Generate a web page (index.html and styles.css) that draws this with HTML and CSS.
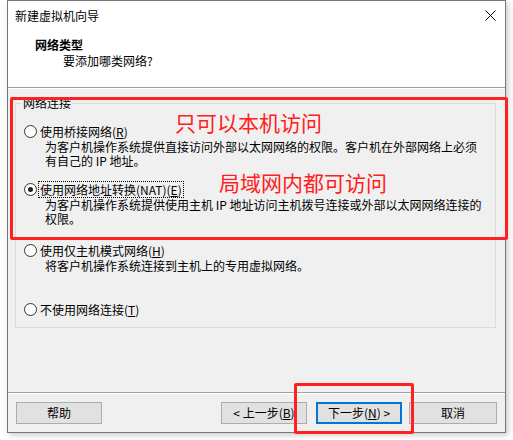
FILE: index.html
```html
<!DOCTYPE html>
<html lang="zh-CN">
<head>
<meta charset="utf-8">
<title>新建虚拟机向导</title>
<link rel="stylesheet" href="styles.css">
</head>
<body>
<div class="window">
  <div class="titlebar">
    <span class="title">新建虚拟机向导</span>
    <svg class="close" width="11" height="11" viewBox="0 0 11 11"><path d="M0.5 0.5 L10.5 10.5 M10.5 0.5 L0.5 10.5" stroke="#000" stroke-width="1" fill="none"/></svg>
  </div>
  <div class="header">
    <div class="h-title">网络类型</div>
    <div class="h-sub">要添加哪类网络?</div>
  </div>
  <div class="content">
    <fieldset class="group">
      <legend>网络连接</legend>
      <div class="row first"><span class="radio"></span><span class="label">使用桥接网络(<u>R</u>)</span></div>
      <div class="desc">
        <div class="line">为客户机操作系统提供直接访问外部以太网网络的权限。客户机在外部网络上必须</div>
        <div class="line">有自己的 IP 地址。</div>
      </div>
      <div class="row second"><span class="radio checked"></span><span class="label focus">使用网络地址转换(NAT)(<u>E</u>)</span></div>
      <div class="desc">
        <div class="line">为客户机操作系统提供使用主机 IP 地址访问主机拨号连接或外部以太网网络连接的</div>
        <div class="line">权限。</div>
      </div>
      <div class="row third"><span class="radio"></span><span class="label">使用仅主机模式网络(<u>H</u>)</span></div>
      <div class="desc">
        <div class="line">将客户机操作系统连接到主机上的专用虚拟网络。</div>
      </div>
      <div class="row fourth"><span class="radio"></span><span class="label">不使用网络连接(<u>T</u>)</span></div>
    </fieldset>
  </div>
  <div class="footer">
    <button class="btn">帮助</button>
    <div class="spacer"></div>
    <button class="btn back">&lt; 上一步(<u>B</u>)</button>
    <button class="btn next">下一步(<u>N</u>) &gt;</button>
    <button class="btn cancel">取消</button>
  </div>
</div>
<div class="mark mark-group"></div>
<div class="mark mark-next"></div>
<div class="note note1">只可以本机访问</div>
<div class="note note2">局域网内都可访问</div>
</body>
</html>
```
FILE: styles.css
```css
* { box-sizing: border-box; }
html, body { margin: 0; padding: 0; }
body {
  width: 513px;
  height: 440px;
  background: #ffffff;
  font-family: "Noto Sans CJK SC", "Noto Sans", sans-serif;
  font-size: 12px;
  color: #000;
  position: relative;
  overflow: hidden;
}
.window {
  margin-left: 7px;
  width: 499px;
  height: 433px;
  border: 1px solid #777777;
  background: #f0f0f0;
  box-shadow: 2px 2px 6px rgba(0,0,0,0.22);
  display: flex;
  flex-direction: column;
}
.titlebar {
  height: 30px;
  background: #fff;
  display: flex;
  align-items: center;
  justify-content: space-between;
  padding: 0 9px 0 7px;
}
.title { line-height: 30px; }
.close { display: block; margin-top: -1px; }
.header {
  height: 57px;
  background: #fff;
  border-bottom: 1px solid #a0a0a0;
  padding: 6px 0 0 27px;
}
.h-title { font-weight: bold; line-height: 16px; }
.h-sub { line-height: 16px; margin-left: 28px; }
.content {
  height: 304px;
  border-top: 1px solid #ffffff;
  padding: 0;
}
.group {
  margin: 6px 0 0 7px;
  width: 481px;
  height: 233px;
  border: 1px solid #dcdcdc;
  padding: 0 0 0 8px;
}
.group legend {
  margin-left: -2px;
  padding: 0 1px;
  line-height: 16px;
}
.row {
  display: flex;
  align-items: center;
  height: 16px;
}
.row.first { margin-top: 12px; }
.row.second { margin-top: 13px; }
.row.third { margin-top: 16px; }
.row.fourth { margin-top: 28px; }
.radio {
  width: 13px;
  height: 13px;
  border: 1px solid #333;
  border-radius: 50%;
  background: #fff;
  position: relative;
  flex: none;
}
.radio.checked::after {
  content: "";
  position: absolute;
  left: 3px;
  top: 3px;
  width: 5px;
  height: 5px;
  border-radius: 50%;
  background: #222;
}
.label {
  margin-left: 1px;
  padding: 0 1px;
  border: 1px dotted transparent;
  line-height: 15px;
  white-space: nowrap;
}
.label.focus { border-color: #000; }
.desc {
  margin: 1px 0 0 21px;
}
.desc .line {
  height: 14px;
  line-height: 14px;
  white-space: nowrap;
}
.footer {
  height: 40px;
  border-top: 1px solid #a0a0a0;
  box-shadow: inset 0 1px 0 #ffffff;
  display: flex;
  align-items: flex-start;
  padding: 9px 8px 0 8px;
}
.spacer { flex: 1; }
.btn {
  width: 86px;
  height: 22px;
  background: #e1e1e1;
  border: 1px solid #adadad;
  font-family: inherit;
  font-size: 12px;
  color: #000;
  padding: 0;
  line-height: 18px;
  margin: 0;
}
.back { margin-right: 9px; }
.next { border: 2px solid #0078d7; }
.cancel { width: 88px; margin-left: 7px; }
.mark {
  position: absolute;
  border: 3px solid #ff2020;
  border-radius: 2px;
}
.mark-group { left: 10px; top: 97px; width: 498px; height: 143px; }
.mark-next { left: 294px; top: 383px; width: 120px; height: 51px; }
.note {
  position: absolute;
  color: #ff2020;
  font-size: 21px;
  line-height: 24px;
  white-space: nowrap;
}
.note1 { left: 175px; top: 110px; }
.note2 { left: 219px; top: 170px; }
```
